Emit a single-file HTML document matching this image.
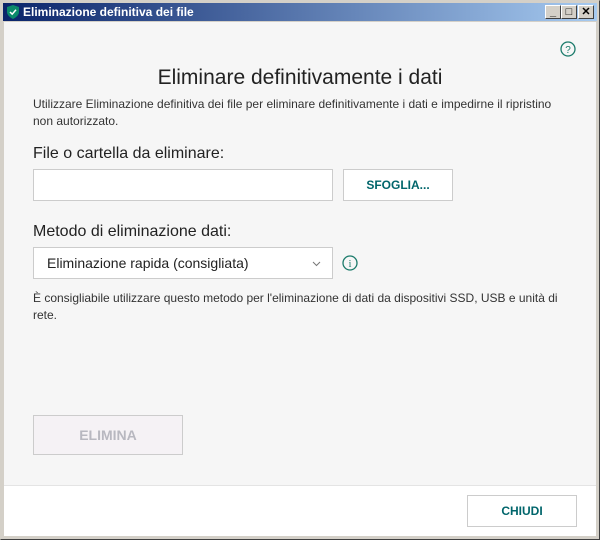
<!DOCTYPE html>
<html><head><meta charset="utf-8"><style>
*{margin:0;padding:0;box-sizing:border-box}
body{width:600px;height:540px;overflow:hidden;background:#d4d0c8;font-family:"Liberation Sans",sans-serif;position:relative}
.frame{position:absolute;left:0;top:0;width:600px;height:540px;border:1px solid #404040;border-top-color:#d4d0c8;border-left-color:#d4d0c8}
.title{position:absolute;left:3px;top:3px;width:594px;height:18px;background:linear-gradient(90deg,#0a246a,#a6caf0);color:#fff;font-weight:bold;font-size:12px;line-height:18px;padding-left:20px}
.shield{position:absolute;left:4px;top:2px}
.wb{position:absolute;top:5px;width:16px;height:14px;background:#d4d0c8;border:1px solid;border-color:#fff #404040 #404040 #fff;font-size:11px;line-height:12px;text-align:center;color:#000;font-weight:bold}
.content{position:absolute;left:4px;top:22px;width:592px;height:514px;background:#f6f6f6}
.footer{position:absolute;left:4px;top:485px;width:592px;height:51px;background:#fff;border-top:1px solid #e4e4e4}
.a{position:absolute}
h1{position:absolute;left:0;width:600px;top:66px;text-align:center;font-size:21px;font-weight:normal;color:#222}
.txt{font-size:12px;color:#333;line-height:17px}
.lbl{font-size:16px;color:#222}
.box{position:absolute;background:#fff;border:1px solid #ccc}
.btn{position:absolute;background:#fff;border:1px solid #ccc;text-align:center;font-size:12px;color:#00656b;font-weight:bold}
</style></head><body>
<div class="frame"></div>
<div class="title"><svg class="shield" width="12" height="14" viewBox="0 0 12 14"><path d="M6 0L12 2V7C12 10 9 12.5 6 14C3 12.5 0 10 0 7V2Z" fill="#0a8a6a"/><path d="M3 7L5.2 9.2L9 4.8" stroke="#fff" stroke-width="1.5" fill="none"/></svg>Eliminazione definitiva dei file</div>
<div class="wb" style="left:545px">_</div><div class="wb" style="left:561px">□</div><div class="wb" style="left:578px">✕</div>
<div class="content"></div>
<div class="footer"></div>
<svg class="a" style="left:560px;top:41px" width="16" height="16" viewBox="0 0 16 16"><circle cx="8" cy="8" r="7" fill="none" stroke="#1a7a6a" stroke-width="1.3"/><text x="8" y="12" font-size="10" text-anchor="middle" fill="#1a7a6a" font-family="Liberation Sans">?</text></svg>
<h1>Eliminare definitivamente i dati</h1>
<div class="a txt" style="left:33px;top:96px;width:540px">Utilizzare Eliminazione definitiva dei file per eliminare definitivamente i dati e impedirne il ripristino non autorizzato.</div>
<div class="a lbl" style="left:33px;top:145px">File o cartella da eliminare:</div>
<div class="box" style="left:33px;top:169px;width:300px;height:32px"></div>
<div class="btn" style="left:343px;top:169px;width:110px;height:32px;line-height:30px">SFOGLIA...</div>
<div class="a lbl" style="left:33px;top:223px">Metodo di eliminazione dati:</div>
<div class="box" style="left:33px;top:247px;width:300px;height:32px;font-size:14px;line-height:30px;padding-left:13px;color:#222">Eliminazione rapida (consigliata)<svg class="a" style="left:278px;top:13px" width="9" height="6"><path d="M1 1L4.5 4.5L8 1" stroke="#777" fill="none"/></svg></div>
<svg class="a" style="left:342px;top:255px" width="16" height="16" viewBox="0 0 16 16"><circle cx="8" cy="8" r="7" fill="none" stroke="#1a7a6a" stroke-width="1.3"/><text x="8" y="12" font-size="10" text-anchor="middle" fill="#1a7a6a" font-family="Liberation Serif">i</text></svg>
<div class="a txt" style="left:33px;top:290px;width:540px">È consigliabile utilizzare questo metodo per l'eliminazione di dati da dispositivi SSD, USB e unità di rete.</div>
<div class="btn" style="left:33px;top:415px;width:150px;height:40px;line-height:38px;background:#f5f2f5;color:#b8b8c0;font-size:14px">ELIMINA</div>
<div class="btn" style="left:467px;top:495px;width:110px;height:32px;line-height:30px">CHIUDI</div>
</body></html>
